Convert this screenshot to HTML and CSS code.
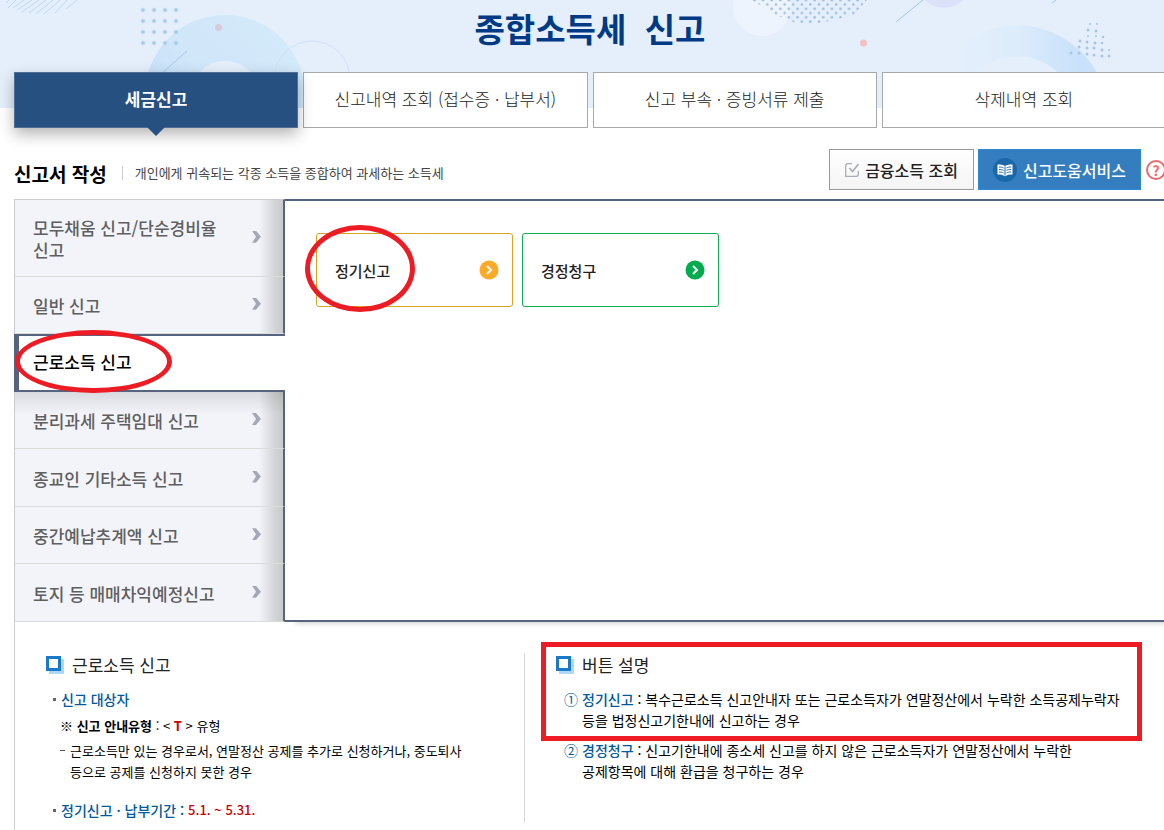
FILE: index.html
```html
<!DOCTYPE html>
<html lang="ko">
<head>
    <meta charset="UTF-8">
    <meta name="viewport" content="width=device-width, initial-scale=1.0">
    <title>종합소득세 신고</title>
    <link rel="stylesheet" href="styles.css">
</head>
<body>
    <svg class="backdrop" width="1164" height="108" viewBox="0 0 1164 108" aria-hidden="true">
        <defs>
            <linearGradient id="ringLeft" x1="0" y1="1" x2="1" y2="0">
                <stop offset="0" stop-color="#bfdaf8"/>
                <stop offset=".5" stop-color="#d0e6f9"/>
                <stop offset="1" stop-color="#d3eafa"/>
            </linearGradient>
            <linearGradient id="ringRight" x1="0" y1="0" x2="1" y2="0">
                <stop offset=".1" stop-color="#e5effc"/>
                <stop offset=".5" stop-color="#dcecfb"/>
                <stop offset=".9" stop-color="#c9e1fa"/>
            </linearGradient>
            <pattern id="grid" x="137.500" y="4.500" width="11" height="11" patternUnits="userSpaceOnUse">
                <circle cx="5.500" cy="5.500" r="2" fill="#a4cbe6"/>
            </pattern>
            <pattern id="halftone" width="8.600" height="8.600" patternUnits="userSpaceOnUse">
                <circle cx="2" cy="4.500" r="1.300" fill="#9dbde2"/>
                <circle cx="6.300" cy=".2" r="1.300" fill="#9dbde2"/>
                <circle cx="6.300" cy="8.800" r="1.300" fill="#9dbde2"/>
            </pattern>
        </defs>
        <path d="M9 0L6 3M16 0l-8 8M24 0L13 8M32 0L17 10M39 0L22 12M46 0L29 13M53 0L36 14M60 0L44 14M67 0L55 13M77 0L66 9" fill="none" stroke="#bcd8f3"/>
        <circle cx="225" cy="95" r="57" fill="none" stroke="url(#ringLeft)" stroke-width="46"/>
        <rect x="140" y="6" width="40" height="40" fill="url(#grid)"/>
        <path d="M162 73l25-22" stroke="#a9c8ee"/>
        <circle cx="218.500" cy="27.500" r="3.500" fill="#d8cbda"/>
        <circle cx="312" cy="79" r="38" fill="none" stroke="#d0e0f8"/>
        <circle cx="762" cy="7" r="29" fill="#edf4fd"/>
        <path d="M752 0h115l-12 14-20 6-21 4h-16l-22-9z" fill="url(#halftone)"/>
        <path d="M896 22l27-22M1052 3l4-3" stroke="#a6c2ea"/>
        <circle cx="944" cy="-20" r="28" fill="#dce1fa"/>
        <circle cx="863.500" cy="43" r="3.500" fill="#f5bfc6"/>
        <circle cx="1017" cy="117" r="76" fill="none" stroke="url(#ringRight)" stroke-width="31"/>
        <g fill="#a9c4e6">
            <circle cx="1090" cy="24" r="1"/><circle cx="1097" cy="24" r="1"/>
            <circle cx="1088" cy="30" r="1.500"/><circle cx="1096" cy="31" r="1.500"/>
            <circle cx="1080" cy="41" r="1.500"/><circle cx="1088" cy="36" r="1"/><circle cx="1096" cy="36" r="1"/><circle cx="1103" cy="37" r="1.300"/>
            <circle cx="1087" cy="42" r="1.500"/><circle cx="1095" cy="43" r="1.500"/><circle cx="1102" cy="43" r="1.300"/>
            <circle cx="1079" cy="47" r="1.500"/><circle cx="1087" cy="48" r="1.500"/><circle cx="1094" cy="48" r="1.500"/><circle cx="1102" cy="50" r="1.500"/><circle cx="1109" cy="50" r="1"/>
            <circle cx="1071" cy="53" r="1.500"/><circle cx="1079" cy="53" r="1.500"/><circle cx="1087" cy="54" r="1.500"/><circle cx="1094" cy="55" r="1.500"/><circle cx="1102" cy="56" r="1.500"/><circle cx="1109" cy="56" r="1.500"/>
        </g>
    </svg>

    <div class="page">
        <h1>종합소득세&nbsp; 신고</h1>

        <nav class="tabs">
            <a href="#" class="tab active">세금신고</a>
            <a href="#" class="tab">신고내역 조회 (접수증 · 납부서)</a>
            <a href="#" class="tab">신고 부속 · 증빙서류 제출</a>
            <a href="#" class="tab">삭제내역 조회</a>
        </nav>

        <div class="toolbar">
            <h2>신고서 작성</h2>
            <p class="summary">개인에게 귀속되는 각종 소득을 종합하여 과세하는 소득세</p>
            <div class="actions">
                <button type="button" class="btn">
                    <svg width="14" height="14" viewBox="0 0 14 14" fill="none" stroke="#a9aeb6" aria-hidden="true">
                        <path d="M7 .7H2L.7 2v11.300H12l1.300-1.300V8" stroke-width="1.300"/>
                        <path d="M4.500 5l3 3.500L13.500 1" stroke-width="1.700"/>
                    </svg>
                    금융소득 조회
                </button>
                <button type="button" class="btn primary">
                    <svg width="24" height="24" viewBox="0 0 24 24" aria-hidden="true">
                        <circle cx="12" cy="12" r="12" fill="#1b68a9"/>
                        <path d="M4.500 6.500c3 0 5.500.3 7.500 1.500 2-1.200 4.500-1.500 7.500-1.500v10c-3 0-5.500.4-7.500 1.700-2-1.300-4.500-1.700-7.500-1.700z" fill="#fff"/>
                        <path d="M12 8.500v9M6 9c2 0 3 .2 4.500.9M6 11.500c2 0 3 .2 4.500.9M6 14c2 0 3 .2 4.500.9M18 9c-2 0-3 .2-4.500.9M18 11.500c-2 0-3 .2-4.500.9M18 14c-2 0-3 .2-4.500.9" fill="none" stroke="#1b68a9"/>
                    </svg>
                    신고도움서비스
                </button>
                <button type="button" class="help" aria-label="도움말">?</button>
            </div>
        </div>

        <div class="workspace">
            <ul class="side-menu">
                <li class="tall"><a href="#">모두채움 신고/단순경비율<br>신고</a></li>
                <li><a href="#">일반 신고</a></li>
                <li class="active"><a href="#"><span class="circled">근로소득 신고</span></a></li>
                <li><a href="#">분리과세 주택임대 신고</a></li>
                <li><a href="#">종교인 기타소득 신고</a></li>
                <li><a href="#">중간예납추계액 신고</a></li>
                <li><a href="#">토지 등 매매차익예정신고</a></li>
            </ul>
            <div class="pane">
                <button type="button" class="card regular">
                    <span class="circled">정기신고</span>
                    <svg width="20" height="20" viewBox="0 0 20 20" aria-hidden="true">
                        <circle cx="10" cy="10" r="9.500" fill="#fea927"/>
                        <path d="M8 6l4 4-4 4" fill="none" stroke="#fff" stroke-width="2"/>
                    </svg>
                </button>
                <button type="button" class="card correction">
                    <span>경정청구</span>
                    <svg width="20" height="20" viewBox="0 0 20 20" aria-hidden="true">
                        <circle cx="10" cy="10" r="9.500" fill="#03ab4f"/>
                        <path d="M8 6l4 4-4 4" fill="none" stroke="#fff" stroke-width="2"/>
                    </svg>
                </button>
            </div>
        </div>

        <div class="guide">
            <section class="guide-col">
                <h3>근로소득 신고</h3>
                <h4>신고 대상자</h4>
                <p class="type">※ <b>신고 안내유형</b> : &lt; <b class="red">T</b> &gt; 유형</p>
                <p class="target">근로소득만 있는 경우로서, 연말정산 공제를 추가로 신청하거나, 중도퇴사<br>등으로 공제를 신청하지 못한 경우</p>
                <h4>정기신고 · 납부기간 : <span class="red period">5.1. ~ 5.31.</span></h4>
            </section>
            <section class="guide-col">
                <div class="boxed">
                    <h3>버튼 설명</h3>
                    <p class="step"><span class="num">①</span><span><b>정기신고</b> : 복수근로소득 신고안내자 또는 근로소득자가 연말정산에서 누락한 소득공제누락자<br>등을 법정신고기한내에 신고하는 경우</span></p>
                </div>
                <p class="step"><span class="num">②</span><span><b>경정청구</b> : 신고기한내에 종소세 신고를 하지 않은 근로소득자가 연말정산에서 누락한<br>공제항목에 대해 환급을 청구하는 경우</span></p>
            </section>
        </div>
    </div>
</body>
</html>
```

FILE: styles.css
```css
* {
    margin: 0;
    padding: 0;
    box-sizing: border-box;
}

body {
    font-family: "Noto Sans CJK KR", "Noto Sans", sans-serif;
    font-size: 14px;
    line-height: 21px;
    color: #000;
    background: linear-gradient(#e5effc 108px, #fff 108px) no-repeat;
    min-height: 100vh;
    overflow-x: hidden;
}

a {
    color: inherit;
    text-decoration: none;
}

ul {
    list-style: none;
}

button {
    font-family: inherit;
    cursor: pointer;
}

.backdrop {
    position: absolute;
    top: 0;
    left: 0;
}

/* runs slightly past the right edge */
.page {
    position: relative;
    display: flex;
    flex-direction: column;
    min-height: 100vh;
    margin-right: -2px;
    padding-left: 14px;
}

h1 {
    height: 72px;
    padding-top: 4px;
    font-size: 33px;
    line-height: 48px;
    text-align: center;
    color: #003a85;
}

/* tabs */
.tabs {
    display: grid;
    grid-template-columns: repeat(4, 1fr);
    gap: 5px;
}

.tab {
    height: 56px;
    border: 1px solid #a9a9a9;
    background: #fff;
    color: #222;
    font-size: 17px;
    font-weight: 300;
    line-height: 52px;
    text-align: center;
}

.tab.active {
    position: relative;
    border-color: #4d6f97;
    background: #265080;
    color: #fff;
    font-weight: 700;
    box-shadow: 0 6px 14px rgba(0, 0, 0, 0.3);
}

.tab.active::after {
    content: "";
    position: absolute;
    top: 54px;
    left: 50%;
    margin-left: -9px;
    border: 9px solid transparent;
    border-top-color: #265080;
    border-bottom: 0;
}

/* heading row */
.toolbar {
    display: flex;
    align-items: center;
    height: 71px;
    padding-top: 12px;
}

h2 {
    padding-top: 8px;
    font-size: 19px;
    font-weight: 700;
}

.summary {
    margin: 7px 0 0 15px;
    padding-left: 12px;
    border-left: 1px solid #ccc;
    color: #444;
    font-size: 13px;
    line-height: 14px;
}

.actions {
    display: flex;
    align-items: center;
    gap: 4px;
    margin-left: auto;
}

.btn {
    display: flex;
    align-items: center;
    gap: 6px;
    height: 41px;
    padding: 0 15px;
    border: 1px solid #999;
    background: linear-gradient(#fff, #f4f4f4);
    color: #222;
    font-size: 16px;
    font-weight: 500;
}

.btn.primary {
    padding: 0 14px;
    border-color: #2e8ad4;
    background: #347dbe;
    color: #fff;
}

.help {
    width: 20px;
    height: 20px;
    margin-left: 1px;
    border: 2px solid #ec6a6c;
    border-radius: 50%;
    background: #fff;
    color: #ec6a6c;
    font-size: 14px;
    font-weight: 700;
    line-height: 16px;
}

/* menu and pane */
.workspace {
    display: flex;
    min-height: 423px;
}

.side-menu {
    display: flex;
    flex-direction: column;
    width: 271px;
    font-size: 17px;
    line-height: 22px;
    color: #5f5f5f;
    font-weight: 500;
}

.side-menu li {
    display: flex;
    flex: 1 1 57px;
    border-left: 1px solid #ccc;
    border-right: 2px solid #57647f;
    border-bottom: 1px solid #dcdcdc;
    background: linear-gradient(to left, #c9cacb, #d3d4d6 8px, #f3f4fa 24px);
}

.side-menu .tall {
    flex-basis: 77px;
    border-top: 1px solid #ccc;
}

.side-menu a {
    display: flex;
    flex: 1;
    align-items: center;
    justify-content: space-between;
    padding: 2px 22px 0 18px;
}

.side-menu a::after {
    content: "";
    width: 9px;
    height: 12px;
    margin-bottom: 4px;
    background: #a5a8b6;
    clip-path: polygon(0 0, 4px 0, 100% 50%, 4px 100%, 0 100%, 4px 50%);
}

.side-menu .active {
    border: solid #57647f;
    border-width: 2px 0 2px 5px;
    background: #fff;
    color: #000;
}

.side-menu .active a {
    padding: 0 0 1px 14px;
}

.side-menu .active a::after {
    content: none;
}

.side-menu .active + li {
    background: linear-gradient(rgba(0, 0, 0, 0.1), transparent 22px), linear-gradient(to left, #c9cacb, #d3d4d6 8px, #f3f4fa 24px);
}

.pane {
    display: flex;
    flex: 1;
    align-items: flex-start;
    gap: 9px;
    padding: 32px 31px;
    border-top: 2px solid #57647f;
    border-bottom: 2px solid #57647f;
    background: #fff;
    box-shadow: 6px 5px 6px -4px rgba(0, 0, 0, 0.2);
}

.card {
    display: flex;
    align-items: center;
    justify-content: space-between;
    width: 197px;
    height: 74px;
    padding: 0 13px 0 18px;
    border: 1px solid #d9a520;
    border-radius: 3px;
    background: #fff;
    color: #222;
    font-size: 15px;
    font-weight: 500;
}

.card.correction {
    border-color: #0bae55;
}

/* hand-drawn style emphasis */
.circled {
    position: relative;
}

.circled::after {
    content: "";
    position: absolute;
    border: 5px solid #ed1c24;
    border-radius: 50%;
    inset: -21px -40px -20px -18px;
}

.card .circled::after {
    inset: -35px -25px -31px -30px;
}

/* guide */
.guide {
    display: grid;
    grid-template-columns: 510px 1fr;
    flex: 1;
    padding: 31px 0 8px;
    border-left: 1px solid #ccc;
}

.guide-col {
    padding-left: 31px;
}

.guide-col:first-child {
    border-right: 1px solid #d5d5d5;
}

.guide-col:last-child {
    padding-right: 34px;
}

h3 {
    display: flex;
    align-items: center;
    gap: 8px;
    margin-bottom: 12px;
    color: #222;
    font-size: 17px;
    font-weight: 400;
    line-height: 24px;
}

h3::before {
    content: "";
    width: 9px;
    height: 9px;
    margin: 0 3px 3px 0;
    border: 3px solid #1b7ac8;
    background: #fff;
    box-shadow: 3px 3px 0 #add8f7;
}

h4 {
    display: flex;
    align-items: center;
    color: #00599d;
    font-size: 14px;
    font-weight: 500;
    line-height: 20px;
    white-space: pre;
}

h4::before {
    content: "";
    width: 3px;
    height: 3px;
    margin: 0 5px 0 7px;
    background: #666;
}

.red {
    color: #c00;
}

.period {
    font-size: 13px;
}

.type {
    margin: 7px 0 4px 14px;
    font-size: 13px;
    line-height: 20px;
}

.target {
    position: relative;
    margin: 0 0 18px 24px;
    font-size: 13px;
}

.target::before {
    content: "";
    position: absolute;
    top: 10px;
    left: -10px;
    width: 5px;
    height: 1px;
    background: #555;
}

.boxed {
    position: relative;
    margin-bottom: 9px;
}

.boxed::after {
    content: "";
    position: absolute;
    inset: -11px -10px -10px -15px;
    border: 5px solid #ed1c24;
}

.step {
    display: flex;
    gap: 4px;
    padding-left: 8px;
    white-space: nowrap;
}

.step b,
.step .num {
    color: #00599d;
}

.step b {
    font-weight: 500;
}
```
